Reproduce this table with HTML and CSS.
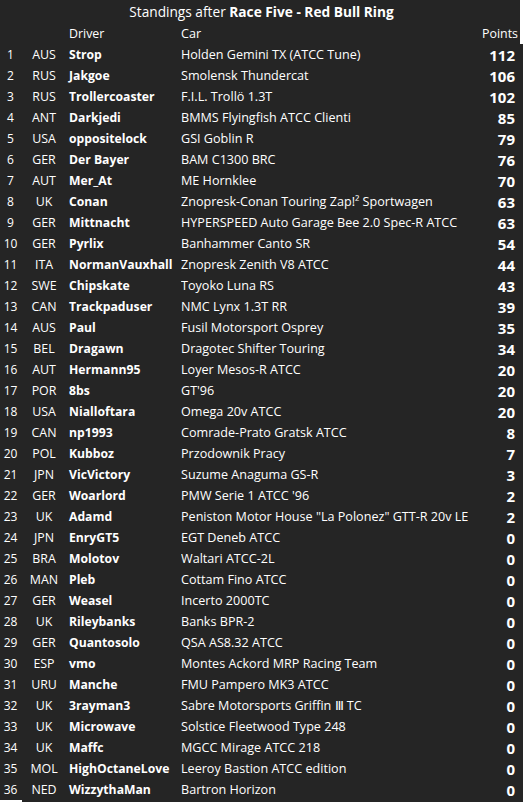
FILE: index.html
```html
<!DOCTYPE html>
<html>
<head>
<meta charset="utf-8">
<link rel="stylesheet" href="styles.css">
</head>
<body>
<div class="panel">
  <div class="title">Standings after <b>Race Five - Red Bull Ring</b></div>
  <div class="row head"><span></span><span></span><span class="drv">Driver</span><span class="car">Car</span><span class="pts">Points</span></div>
  <div class="row"><span class="pos">1</span><span class="cty">AUS</span><span class="drv">Strop</span><span class="car">Holden Gemini TX (ATCC Tune)</span><span class="pts">112</span></div>
  <div class="row"><span class="pos">2</span><span class="cty">RUS</span><span class="drv">Jakgoe</span><span class="car">Smolensk Thundercat</span><span class="pts">106</span></div>
  <div class="row"><span class="pos">3</span><span class="cty">RUS</span><span class="drv">Trollercoaster</span><span class="car">F.I.L. Trollö 1.3T</span><span class="pts">102</span></div>
  <div class="row"><span class="pos">4</span><span class="cty">ANT</span><span class="drv">Darkjedi</span><span class="car">BMMS Flyingfish ATCC Clienti</span><span class="pts">85</span></div>
  <div class="row"><span class="pos">5</span><span class="cty">USA</span><span class="drv">oppositelock</span><span class="car">GSI Goblin R</span><span class="pts">79</span></div>
  <div class="row"><span class="pos">6</span><span class="cty">GER</span><span class="drv">Der Bayer</span><span class="car">BAM C1300 BRC</span><span class="pts">76</span></div>
  <div class="row"><span class="pos">7</span><span class="cty">AUT</span><span class="drv">Mer_At</span><span class="car">ME Hornklee</span><span class="pts">70</span></div>
  <div class="row"><span class="pos">8</span><span class="cty">UK</span><span class="drv">Conan</span><span class="car">Znopresk-Conan Touring Zap!² Sportwagen</span><span class="pts">63</span></div>
  <div class="row"><span class="pos">9</span><span class="cty">GER</span><span class="drv">Mittnacht</span><span class="car">HYPERSPEED Auto Garage Bee 2.0 Spec-R ATCC</span><span class="pts">63</span></div>
  <div class="row"><span class="pos">10</span><span class="cty">GER</span><span class="drv">Pyrlix</span><span class="car">Banhammer Canto SR</span><span class="pts">54</span></div>
  <div class="row"><span class="pos">11</span><span class="cty">ITA</span><span class="drv">NormanVauxhall</span><span class="car">Znopresk Zenith V8 ATCC</span><span class="pts">44</span></div>
  <div class="row"><span class="pos">12</span><span class="cty">SWE</span><span class="drv">Chipskate</span><span class="car">Toyoko Luna RS</span><span class="pts">43</span></div>
  <div class="row"><span class="pos">13</span><span class="cty">CAN</span><span class="drv">Trackpaduser</span><span class="car">NMC Lynx 1.3T RR</span><span class="pts">39</span></div>
  <div class="row"><span class="pos">14</span><span class="cty">AUS</span><span class="drv">Paul</span><span class="car">Fusil Motorsport Osprey</span><span class="pts">35</span></div>
  <div class="row"><span class="pos">15</span><span class="cty">BEL</span><span class="drv">Dragawn</span><span class="car">Dragotec Shifter Touring</span><span class="pts">34</span></div>
  <div class="row"><span class="pos">16</span><span class="cty">AUT</span><span class="drv">Hermann95</span><span class="car">Loyer Mesos-R ATCC</span><span class="pts">20</span></div>
  <div class="row"><span class="pos">17</span><span class="cty">POR</span><span class="drv">8bs</span><span class="car">GT'96</span><span class="pts">20</span></div>
  <div class="row"><span class="pos">18</span><span class="cty">USA</span><span class="drv">Nialloftara</span><span class="car">Omega 20v ATCC</span><span class="pts">20</span></div>
  <div class="row"><span class="pos">19</span><span class="cty">CAN</span><span class="drv">np1993</span><span class="car">Comrade-Prato Gratsk ATCC</span><span class="pts">8</span></div>
  <div class="row"><span class="pos">20</span><span class="cty">POL</span><span class="drv">Kubboz</span><span class="car">Przodownik Pracy</span><span class="pts">7</span></div>
  <div class="row"><span class="pos">21</span><span class="cty">JPN</span><span class="drv">VicVictory</span><span class="car">Suzume Anaguma GS-R</span><span class="pts">3</span></div>
  <div class="row"><span class="pos">22</span><span class="cty">GER</span><span class="drv">Woarlord</span><span class="car">PMW Serie 1 ATCC '96</span><span class="pts">2</span></div>
  <div class="row"><span class="pos">23</span><span class="cty">UK</span><span class="drv">Adamd</span><span class="car">Peniston Motor House "La Polonez" GTT-R 20v LE</span><span class="pts">2</span></div>
  <div class="row"><span class="pos">24</span><span class="cty">JPN</span><span class="drv">EnryGT5</span><span class="car">EGT Deneb ATCC</span><span class="pts">0</span></div>
  <div class="row"><span class="pos">25</span><span class="cty">BRA</span><span class="drv">Molotov</span><span class="car">Waltari ATCC-2L</span><span class="pts">0</span></div>
  <div class="row"><span class="pos">26</span><span class="cty">MAN</span><span class="drv">Pleb</span><span class="car">Cottam Fino ATCC</span><span class="pts">0</span></div>
  <div class="row"><span class="pos">27</span><span class="cty">GER</span><span class="drv">Weasel</span><span class="car">Incerto 2000TC</span><span class="pts">0</span></div>
  <div class="row"><span class="pos">28</span><span class="cty">UK</span><span class="drv">Rileybanks</span><span class="car">Banks BPR-2</span><span class="pts">0</span></div>
  <div class="row"><span class="pos">29</span><span class="cty">GER</span><span class="drv">Quantosolo</span><span class="car">QSA AS8.32 ATCC</span><span class="pts">0</span></div>
  <div class="row"><span class="pos">30</span><span class="cty">ESP</span><span class="drv">vmo</span><span class="car">Montes Ackord MRP Racing Team</span><span class="pts">0</span></div>
  <div class="row"><span class="pos">31</span><span class="cty">URU</span><span class="drv">Manche</span><span class="car">FMU Pampero MK3 ATCC</span><span class="pts">0</span></div>
  <div class="row"><span class="pos">32</span><span class="cty">UK</span><span class="drv">3rayman3</span><span class="car">Sabre Motorsports Griffin Ⅲ TC</span><span class="pts">0</span></div>
  <div class="row"><span class="pos">33</span><span class="cty">UK</span><span class="drv">Microwave</span><span class="car">Solstice Fleetwood Type 248</span><span class="pts">0</span></div>
  <div class="row"><span class="pos">34</span><span class="cty">UK</span><span class="drv">Maffc</span><span class="car">MGCC Mirage ATCC 218</span><span class="pts">0</span></div>
  <div class="row"><span class="pos">35</span><span class="cty">MOL</span><span class="drv">HighOctaneLove</span><span class="car">Leeroy Bastion ATCC edition</span><span class="pts">0</span></div>
  <div class="row"><span class="pos">36</span><span class="cty">NED</span><span class="drv">WizzythaMan</span><span class="car">Bartron Horizon</span><span class="pts">0</span></div>
  <div class="edge-right"></div>
  <div class="edge-bottom"></div>
</div>
</body>
</html>
```

FILE: styles.css
```css
html, body {
  margin: 0;
  padding: 0;
  background: #252525;
}
body {
  font-family: "Open Sans", "Noto Sans", sans-serif;
  color: #ffffff;
  font-size: 12px;
}
.panel {
  position: relative;
  width: 523px;
  height: 802px;
  overflow: hidden;
}
.title {
  height: 23px;
  line-height: 24px;
  font-size: 13.7px;
  text-align: center;
  white-space: nowrap;
}
.title b {
  font-weight: 700;
}
.row {
  display: grid;
  grid-template-columns: 21px 46px 114px 1fr auto;
  height: 21px;
  line-height: 22px;
  white-space: nowrap;
}
.pos, .cty {
  text-align: center;
}
.cty {
  font-size: 12.4px;
}
.drv {
  padding-left: 2px;
  font-weight: 700;
  font-size: 12.2px;
}
.car {
  overflow: hidden;
  font-size: 12.6px;
}
.pts {
  text-align: right;
  padding-right: 8px;
  font-size: 15px;
  font-weight: 700;
}
.head .drv {
  font-weight: 400;
  font-size: 12.4px;
}
.head .pts {
  font-size: 12.4px;
  font-weight: 400;
  padding-right: 5px;
}
.edge-right {
  position: absolute;
  right: 0;
  top: 0;
  width: 3px;
  height: 44px;
  background: #ffffff;
}
.edge-bottom {
  position: absolute;
  left: 0;
  bottom: 0;
  width: 22px;
  height: 2px;
  background: #ffffff;
}
```
